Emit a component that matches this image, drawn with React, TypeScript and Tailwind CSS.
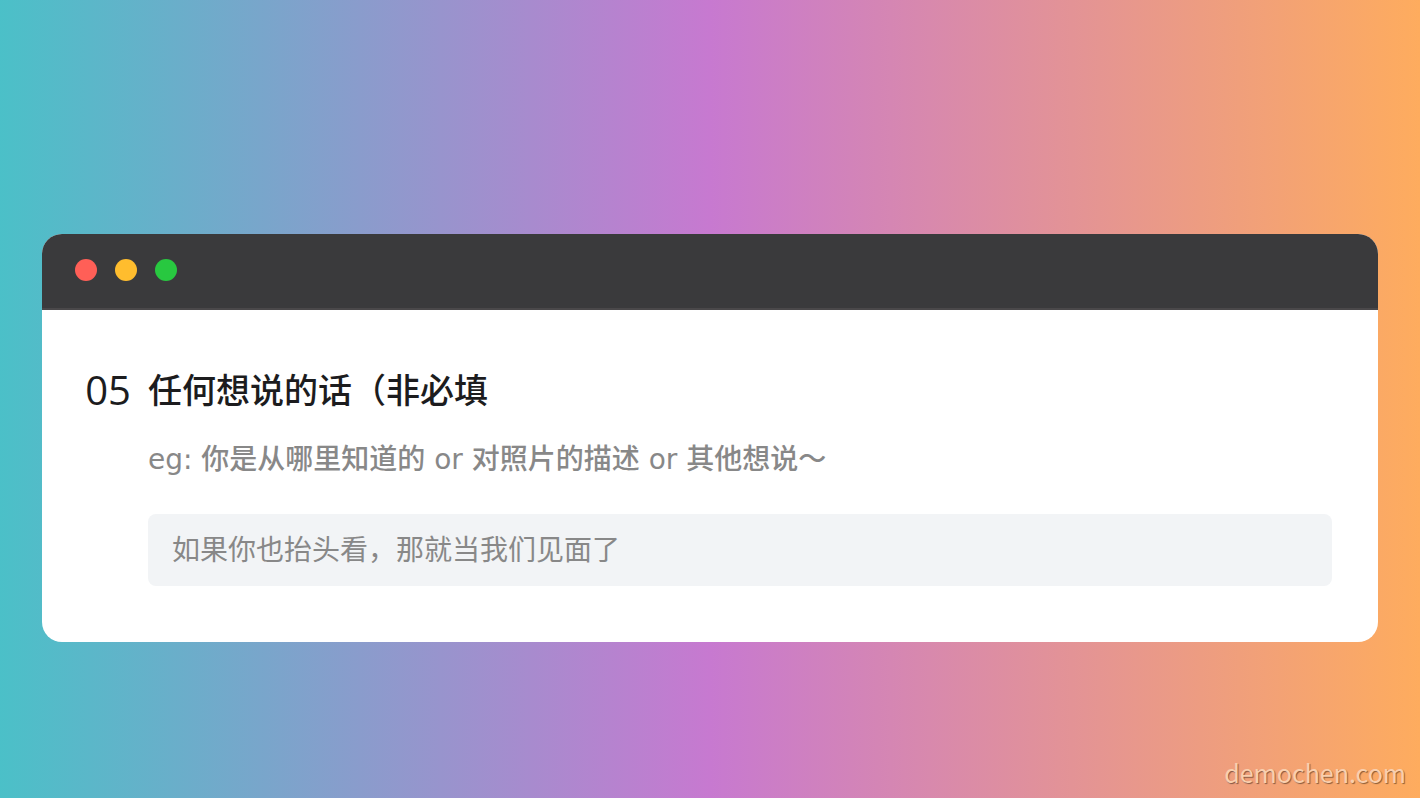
const App = () => {
  return (
    <main className="relative flex min-h-screen flex-col justify-center bg-[linear-gradient(90deg,#4bc0c8,#c779d0_50%,#feac5e)] px-[42px] pt-[78px] font-['Open_Sans','Noto_Sans_CJK_SC',sans-serif]">
      <section className="overflow-hidden rounded-[20px] bg-white">
        <header className="flex h-[76px] items-center gap-[18px] border-b-2 border-[#4a484a] bg-[#3a3a3c] px-[33px] pb-0.5">
          <span className="size-[22px] rounded-full bg-[#ff5f57]" />
          <span className="size-[22px] rounded-full bg-[#ffbd2e]" />
          <span className="size-[22px] rounded-full bg-[#28c840]" />
        </header>

        <form className="flex gap-4 pt-14 pr-[46px] pb-14 pl-[42px]">
          <span className="w-12 text-center text-[40px] leading-12 font-medium text-[#1c1c1e]">05</span>
          <div className="flex-1">
            <label htmlFor="message" className="block text-[34px] leading-12 font-medium text-[#1c1c1e]">
              任何想说的话（非必填
            </label>
            <p className="mt-6 text-[28px] leading-11 font-medium text-[#888888] font-['DejaVu_Sans','Noto_Sans_CJK_SC',sans-serif]">
              eg: 你是从哪里知道的 or 对照片的描述 or 其他想说～
            </p>
            <input
              id="message"
              type="text"
              defaultValue="如果你也抬头看，那就当我们见面了"
              className="mt-8 block h-[72px] w-full rounded-lg bg-[#f2f4f6] px-6 pb-1 text-[28px] text-[#888888] outline-none"
            />
          </div>
        </form>
      </section>

      <a
        href="https://demochen.com"
        className="absolute right-[14px] bottom-[10px] text-[25px] leading-8 text-[#f9cfae] [text-shadow:1px_1px_1px_rgb(0_0_0/0.45)] font-['Noto_Sans_CJK_SC',sans-serif]"
      >
        demochen.com
      </a>
    </main>
  );
};

export default App;
